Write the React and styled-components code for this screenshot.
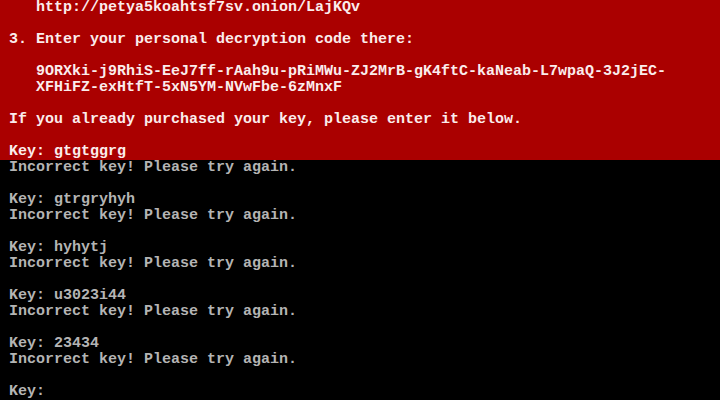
import styled, {createGlobalStyle} from 'styled-components';

const GlobalStyle = createGlobalStyle`
  html, body {
    margin: 0;
    padding: 0;
    background: #000;
  }
`;

const Screen = styled.div`
  width: 720px;
  height: 400px;
  overflow: hidden;
  display: flex;
  flex-direction: column;
  font-family: 'Liberation Mono', 'DejaVu Sans Mono', monospace;
  font-size: 15px;
  font-weight: bold;
  line-height: 16px;
`;

const Panel = styled.div`
  background: ${(props) => props.bg};
  color: ${(props) => props.fg};
  flex: ${(props) => (props.grow ? 1 : 'none')};
`;

const Line = styled.div`
  height: 16px;
  white-space: pre;
  padding-left: ${(props) => (props.indent || 0) * 9}px;
`;

const redLines = [
  {indent: 4, text: 'http://petya5koahtsf7sv.onion/LajKQv'},
  {text: ''},
  {indent: 1, text: '3. Enter your personal decryption code there:'},
  {text: ''},
  {indent: 4, text: '9ORXki-j9RhiS-EeJ7ff-rAah9u-pRiMWu-ZJ2MrB-gK4ftC-kaNeab-L7wpaQ-3J2jEC-'},
  {indent: 4, text: 'XFHiFZ-exHtfT-5xN5YM-NVwFbe-6zMnxF'},
  {text: ''},
  {indent: 1, text: 'If you already purchased your key, please enter it below.'},
  {text: ''},
  {indent: 1, text: 'Key: gtgtggrg'},
];

const attempts = ['gtrgryhyh', 'hyhytj', 'u3023i44', '23434'];

const App = () => {
  const blackLines = [{indent: 1, text: 'Incorrect key! Please try again.'}];
  attempts.forEach((key) => {
    blackLines.push({text: ''});
    blackLines.push({indent: 1, text: `Key: ${key}`});
    blackLines.push({indent: 1, text: 'Incorrect key! Please try again.'});
  });
  blackLines.push({text: ''});
  blackLines.push({indent: 1, text: 'Key: '});

  return (
    <>
      <GlobalStyle />
      <Screen>
        <Panel bg="#aa0000" fg="#fbecec">
          {redLines.map((l, i) => (
            <Line key={i} indent={l.indent}>{l.text}</Line>
          ))}
        </Panel>
        <Panel grow bg="#000000" fg="#b4b4b4">
          {blackLines.map((l, i) => (
            <Line key={i} indent={l.indent}>{l.text}</Line>
          ))}
        </Panel>
      </Screen>
    </>
  );
};

export default App;
